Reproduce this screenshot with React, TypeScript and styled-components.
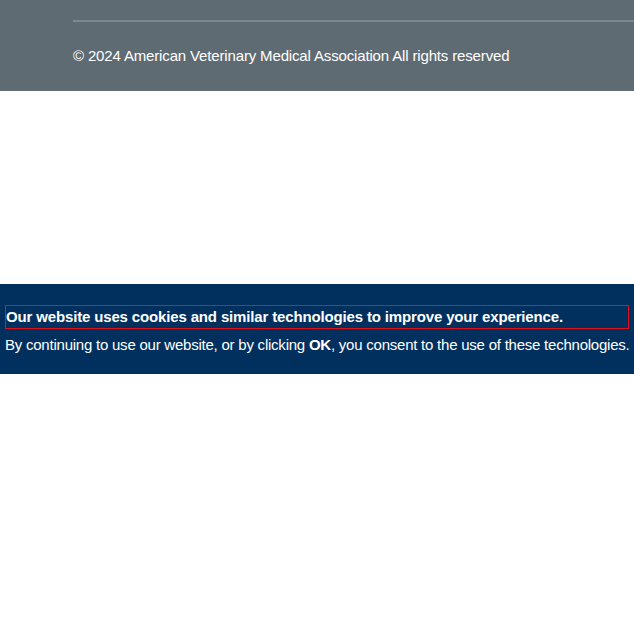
import React from "react";
import styled, { createGlobalStyle } from "styled-components";

const Global = createGlobalStyle`
  html, body { margin: 0; padding: 0; background: #ffffff; }
  body { font-family: "Liberation Sans", Arial, sans-serif; }
`;

const Footer = styled.footer`
  height: 91px;
  background: #5f6b73;
  box-sizing: border-box;
  padding: 20px 0 0 73px;
`;

const Rule = styled.hr`
  margin: 0;
  border: 0;
  height: 2px;
  background: #7d878e;
`;

const Copyright = styled.p`
  margin: 0;
  padding-top: 24px;
  color: #ffffff;
  font-size: 15px;
  line-height: 20px;
  letter-spacing: -0.15px;
`;

const Spacer = styled.div`
  height: 193px;
`;

const Banner = styled.section`
  height: 90px;
  background: #01305e;
  box-sizing: border-box;
  padding: 21px 5px 0 5px;
  color: #ffffff;
`;

const Heading = styled.h2`
  margin: 0;
  border: 1px solid #e0101a;
  font-size: 15px;
  line-height: 22px;
  font-weight: 700;
  letter-spacing: -0.15px;
  white-space: nowrap;
`;

const Body = styled.p`
  margin: 6px 0 0 0;
  font-size: 15px;
  line-height: 20px;
  letter-spacing: -0.23px;
  white-space: nowrap;
`;

export default function App() {
  return (
    <>
      <Global />
      <Footer>
        <Rule />
        <Copyright>© 2024 American Veterinary Medical Association All rights reserved</Copyright>
      </Footer>
      <Spacer />
      <Banner>
        <Heading>Our website uses cookies and similar technologies to improve your experience.</Heading>
        <Body>
          By continuing to use our website, or by clicking <b>OK</b>, you consent to the use of these technologies.
        </Body>
      </Banner>
    </>
  );
}
